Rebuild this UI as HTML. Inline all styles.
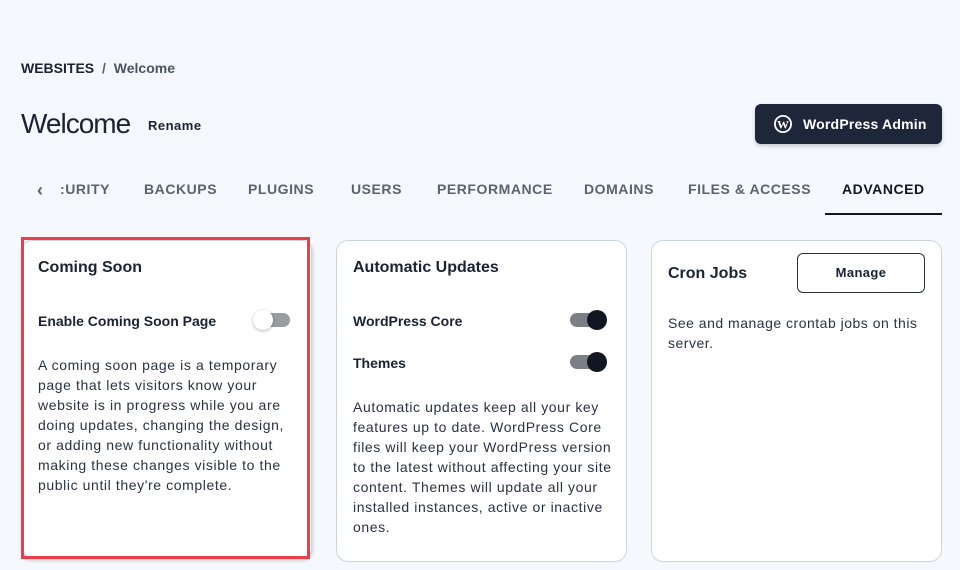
<!DOCTYPE html><html><head><style>
body{margin:0;width:960px;height:570px;background:#f5f8fc;font-family:"Liberation Sans",sans-serif;color:#1a2233;position:relative;overflow:hidden}
.a{position:absolute}
.tab{position:absolute;top:181px;font-size:14px;font-weight:bold;letter-spacing:.55px;color:#5a6270}
.card{position:absolute;background:#fff;border:1px solid #cfd4dc;border-radius:12px;box-sizing:border-box}
.h{position:absolute;font-size:16px;font-weight:bold;color:#1a2233}
.p{position:absolute;font-size:14px;line-height:20px;color:#2a3140;white-space:nowrap}
.lbl{position:absolute;font-size:14px;font-weight:bold;color:#1a2233}
.tg{position:absolute;width:36px;height:14px;border-radius:7px;background:#7c7f86}
.tg i{position:absolute;top:-3px;width:20px;height:20px;border-radius:50%;background:#111722}
</style></head><body>
<div class="a" style="left:21px;top:60px;font-size:14px;font-weight:bold;color:#1a2233">WEBSITES <span style="color:#5a6270;margin:0 4px">/</span> <span style="color:#4a5262">Welcome</span></div>
<div class="a" style="left:21px;top:108px;font-size:28px;letter-spacing:-1px;color:#1a2233">Welcome</div>
<div class="a" style="left:148px;top:118px;font-size:13px;font-weight:bold;letter-spacing:.5px">Rename</div>
<div class="a" style="left:755px;top:104px;width:187px;height:40px;background:#1d2739;border-radius:6px;box-shadow:0 2px 4px rgba(0,0,0,.2)">
<svg class="a" style="left:18px;top:10px" width="20" height="20" viewBox="0 0 20 20"><circle cx="10" cy="10" r="9" fill="#fff"/><circle cx="10" cy="10" r="7.2" fill="#1d2739"/><text x="10" y="14.5" font-size="12" font-weight="bold" text-anchor="middle" fill="#fff" font-family="Liberation Serif">W</text></svg>
<div class="a" style="left:48px;top:12px;color:#fff;font-size:14px;font-weight:bold;letter-spacing:.2px">WordPress Admin</div></div>
<div class="a" style="left:37px;top:180px;font-size:18px;color:#5a6270;font-weight:bold">‹</div>
<div class="tab" style="left:60px">:URITY</div>
<div class="tab" style="left:144px">BACKUPS</div>
<div class="tab" style="left:248px">PLUGINS</div>
<div class="tab" style="left:351px">USERS</div>
<div class="tab" style="left:437px">PERFORMANCE</div>
<div class="tab" style="left:584px">DOMAINS</div>
<div class="tab" style="left:688px">FILES &amp; ACCESS</div>
<div class="tab" style="left:842px;color:#111722">ADVANCED</div>
<div class="a" style="left:825px;top:213px;width:117px;height:2px;background:#111722"></div>

<div class="card" style="left:22px;top:240px;width:290px;height:318px;border-radius:10px;box-shadow:0 2px 4px rgba(0,0,0,.25)"></div>
<div class="a" style="left:21px;top:237px;width:289px;height:322px;border:3px solid #e8404a;box-sizing:border-box"></div>
<div class="h" style="left:38px;top:259px">Coming Soon</div>
<div class="lbl" style="left:38px;top:313px">Enable Coming Soon Page</div>
<div class="tg" style="left:254px;top:313px;background:#9a9ca0"><i style="left:-1px;background:#fff;box-shadow:0 1px 3px rgba(0,0,0,.3)"></i></div>
<div class="p" style="left:38px;top:355px;letter-spacing:.6px">A coming soon page is a temporary<br>page that lets visitors know your<br>website is in progress while you are<br>doing updates, changing the design,<br>or adding new functionality without<br>making these changes visible to the<br>public until they're complete.</div>

<div class="card" style="left:336px;top:240px;width:291px;height:322px"></div>
<div class="h" style="left:353px;top:259px">Automatic Updates</div>
<div class="lbl" style="left:353px;top:313px">WordPress Core</div>
<div class="tg" style="left:570px;top:313px"><i style="left:17px"></i></div>
<div class="lbl" style="left:353px;top:355px">Themes</div>
<div class="tg" style="left:570px;top:355px"><i style="left:17px"></i></div>
<div class="p" style="left:353px;top:397px;letter-spacing:.6px">Automatic updates keep all your key<br>features up to date. WordPress Core<br>files will keep your WordPress version<br>to the latest without affecting your site<br>content. Themes will update all your<br>installed instances, active or inactive<br>ones.</div>

<div class="card" style="left:651px;top:240px;width:291px;height:322px"></div>
<div class="h" style="left:668px;top:265px">Cron Jobs</div>
<div class="a" style="left:797px;top:253px;width:128px;height:40px;border:1px solid #2a3140;border-radius:6px;box-sizing:border-box;text-align:center;line-height:38px;font-size:13px;font-weight:bold;letter-spacing:.4px">Manage</div>
<div class="p" style="left:668px;top:313px;letter-spacing:.5px">See and manage crontab jobs on this<br>server.</div>
</body></html>
